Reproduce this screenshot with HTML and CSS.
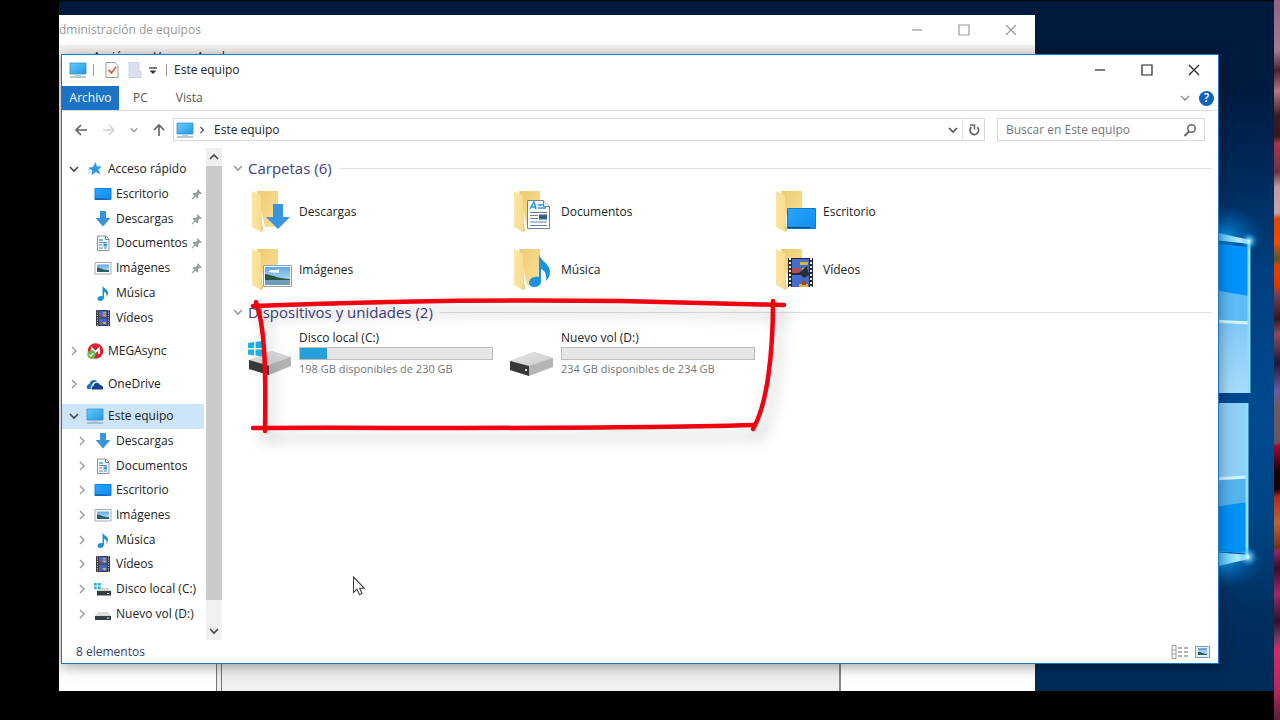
FILE: index.html
```html
<!DOCTYPE html>
<html lang="es">
<head>
<meta charset="utf-8">
<title>Este equipo</title>
<link rel="stylesheet" href="styles.css">
</head>
<body>
<svg class="defs" aria-hidden="true">
  <defs>
    <linearGradient id="gScreen" x1="0" y1="0" x2="1" y2="1"><stop offset="0" stop-color="#67cdfb"/><stop offset="1" stop-color="#2196e4"/></linearGradient>
    <linearGradient id="gFolder" x1="0" y1="0" x2="1" y2="1"><stop offset="0" stop-color="#eecb70"/><stop offset="1" stop-color="#fae09a"/></linearGradient>
    <linearGradient id="gFlap" x1="0" y1="0" x2="1" y2="0"><stop offset="0" stop-color="#fce5a4"/><stop offset="1" stop-color="#f9dc90"/></linearGradient>
    <linearGradient id="gDesk" x1="0" y1="0" x2="1" y2="1"><stop offset="0" stop-color="#2aa6fb"/><stop offset="1" stop-color="#0b8cf0"/></linearGradient>
    <linearGradient id="gDrive" x1="0" y1="0" x2="1" y2="1"><stop offset="0" stop-color="#e6e6e6"/><stop offset="1" stop-color="#cbcbcb"/></linearGradient>
    <linearGradient id="gSky" x1="0" y1="0" x2="0" y2="1"><stop offset="0" stop-color="#5ea5e6"/><stop offset="1" stop-color="#d6ecf9"/></linearGradient>
  </defs>
  <symbol id="pc" viewBox="0 0 18 16"><path d="M1 1h16v11H1z" fill="url(#gScreen)" stroke="#3b8fc9" stroke-width=".8"/><path d="M6 13h6v1H6z" fill="#b9cbd6"/><path d="M1 14.4h16v1.2H1z" fill="#8ba2b0"/></symbol>
  <symbol id="star" viewBox="0 0 16 16"><path d="M8.3 1l1.8 4.5 4.700-.2-3.400 3.500 2 4.700-4.500-2.400-4.400 3.400.8-5L1 6.700l5-.7z" fill="#2f9be8"/><path d="M1 9l3-1M1 12l2.500-1" stroke="#8ecbf4"/></symbol>
  <symbol id="desk" viewBox="0 0 18 16"><path d="M1 2.500h16v11H1z" fill="url(#gDesk)" stroke="#1280d4"/><path d="M1 13h12" stroke="#0a4f8c"/></symbol>
  <symbol id="down" viewBox="0 0 16 16"><path d="M5 0h6v7h4.500L8 15.500.5 7H5z" fill="#3a93dd"/></symbol>
  <symbol id="doc" viewBox="0 0 16 16"><path d="M2.500 1h8.500l3 3v11.500H2.500z" fill="#f7fafb" stroke="#8c979d"/><path d="M10.500 1v3.500H14M4 7.500h8M4 10h3.500M4 13h4M9 13h3" fill="none" stroke="#5b87a5"/><path d="M4 5h4" stroke="#32a0e6" stroke-width="1.500"/><path d="M8.500 8.500h3.500v3H8.500z" fill="#379ad1"/></symbol>
  <symbol id="pic" viewBox="0 0 18 16"><path d="M1 2.500h16v11.500H1z" fill="#fff" stroke="#a3abb5"/><path d="M3 4.500h12v7.500H3z" fill="url(#gSky)"/><path d="M3 7.500c4 0 5 2.500 12 2.500v2H3z" fill="#276472"/></symbol>
  <symbol id="note" viewBox="0 0 16 16"><path d="M7.500 0c.5 3.500 5.500 4 5.500 7.500 0 2-.8 3.500-1.500 4.500.5-3-.5-4.500-2.500-5.200V12.500c0 2-1.600 3.500-3.700 3.500C3.500 16 2.500 15 2.500 13.700c0-1.800 2-3.200 5-2.700z" fill="#1e93dd"/></symbol>
  <symbol id="film" viewBox="0 0 14 16"><path d="M0 0h14v16H0z" fill="#3a3c42"/><path d="M1.500 0v16M12.500 0v16" stroke="#b9b9b9" stroke-dasharray="1.200 1.200"/><path d="M3 1h8v6.500H3zM3 8.500h8V15H3z" fill="#4a66c8"/><path d="M7 2h3v1.500H7zM6 4.500h4v2H8zM6 12h4v2H8z" fill="#d9ad2b"/><path d="M3 5h3v2.500H3z" fill="#8a4a64"/></symbol>
  <symbol id="mega" viewBox="0 0 18 16"><circle cx="9.500" cy="8" r="7.800" fill="#dc2334"/><path d="M6 11V5.500L9.500 9 13 5.500V11" fill="none" stroke="#fff" stroke-width="1.800"/><circle cx="5.500" cy="11.500" r="4.200" fill="#66b548"/><path d="M3.500 11.500l1.500 1.600 2.500-3" fill="none" stroke="#fff" stroke-width="1.200"/></symbol>
  <symbol id="cloud" viewBox="0 0 18 16"><path d="M1.500 13C0 11 1 8.500 3.500 8 4 4 9 2.500 11.500 5.500 8 5.500 6 7.500 5.700 10 4.500 10.500 4.500 12 5 13z" fill="#1f6fc4"/><path d="M6 13.500c-1-2 0-3.300 1.500-3.500C8 6.500 12.500 5.500 14 9c2.500 0 4 2.700 2.500 4.500z" fill="#12418f"/></symbol>
  <symbol id="hdd" viewBox="0 0 18 16"><path d="M4 6h10l3 4H1z" fill="#dcdcdc"/><path d="M1 10h16v4H1z" fill="#3a3d40"/><path d="M13 11.500h2v1h-2z" fill="#d6f2ff"/></symbol>
  <symbol id="hddwin" viewBox="0 0 18 16"><path d="M5 7h9l3 3H3z" fill="#d4d4d4"/><path d="M3 10h14v4.500H3z" fill="#3a3d40"/><path d="M13 12h2v1h-2z" fill="#d6f2ff"/><path d="M0 2h2.700v2.500H0zM3.700 2h3v2.500h-3zM0 5.500h2.700V8H0zM3.700 5.500h3V8h-3z" fill="#1fb6d8"/></symbol>
  <symbol id="pin" viewBox="0 0 12 12"><path d="M6.500 1L11 5.500 9.800 6 8.700 5.700 7 7.500 7.300 9.500 6.200 10.500 1.500 5.800 2.500 4.700 4.500 5 6.300 3.300 6 2z" fill="#98a0a6"/><path d="M4 8L1 11" stroke="#98a0a6" stroke-width="1.200"/></symbol>
  <symbol id="right" viewBox="0 0 10 10"><path d="M3 1l4 4-4 4" fill="none" stroke="currentColor" stroke-width="1.400"/></symbol>
  <symbol id="open" viewBox="0 0 10 10"><path d="M1 3l4 4 4-4" fill="none" stroke="currentColor" stroke-width="1.600"/></symbol>
  <symbol id="folder" viewBox="0 0 44 44"><path d="M6 1h21v36H14z" fill="url(#gFolder)"/><path d="M1 1l9 4.500V42L1 37z" fill="url(#gFlap)"/><path d="M10 5.500V42l2-1v-3.500l-1-1.500z" fill="#f3cf78"/></symbol>
  <symbol id="min" viewBox="0 0 12 12"><path d="M1 6h10" stroke="currentColor" stroke-width="1.200"/></symbol>
  <symbol id="max" viewBox="0 0 12 12"><path d="M1 1h10v10H1z" fill="none" stroke="currentColor" stroke-width="1.200"/></symbol>
  <symbol id="close" viewBox="0 0 12 12"><path d="M1 1l10 10M11 1L1 11" stroke="currentColor" stroke-width="1.200"/></symbol>
</svg>

<main class="desktop">
  <svg class="wallpaper" viewBox="0 0 240 691" preserveAspectRatio="none" aria-hidden="true">
    <defs>
      <radialGradient id="glow"><stop offset="0" stop-color="#0aa5ff" stop-opacity=".8"/><stop offset="1" stop-color="#0067c0" stop-opacity="0"/></radialGradient>
      <radialGradient id="flare"><stop offset="0" stop-color="#e8ffff"/><stop offset=".3" stop-color="#7fdcff" stop-opacity=".7"/><stop offset="1" stop-color="#0a8ae0" stop-opacity="0"/></radialGradient>
      <linearGradient id="paneA" x1="0" y1="0" x2="0" y2="1"><stop offset="0" stop-color="#80c8f8"/><stop offset="1" stop-color="#a6dcfa"/></linearGradient>
      <linearGradient id="ray"><stop offset="0" stop-color="#35bdf8"/><stop offset="1" stop-color="#e6ffff"/></linearGradient>
    </defs>
    <ellipse cx="188" cy="235" rx="42" ry="30" fill="url(#glow)"/>
    <ellipse cx="188" cy="562" rx="42" ry="26" fill="url(#glow)"/>
    <path d="M180 243l35 4v146h-35z" fill="#0092fb"/>
    <path d="M180 290l35 6v97h-35z" fill="#5cbcf5"/>
    <path d="M180 321h35v72h-35z" fill="url(#paneA)"/>
    <path d="M180 321l35 2" stroke="#d6f4ff" stroke-width="3"/>
    <path d="M180 403h34v150l-34-2z" fill="#90d0f8"/>
    <path d="M180 479l34-2v76l-34-2z" fill="#55b4ee"/>
    <path d="M180 507l34-5v51l-34-2z" fill="#0092f8"/>
    <path d="M180 479l34-2" stroke="#d6f4ff" stroke-width="3"/>
    <path d="M215 243v150M213 403v153" stroke="#8ce0fb" stroke-width="3"/>
    <path d="M180 232l36 8v4l-36-4zM180 552l35 3v4l-35 8z" fill="url(#ray)"/>
    <circle cx="215" cy="241" r="9" fill="url(#flare)"/>
    <circle cx="214" cy="557" r="10" fill="url(#flare)"/>
  </svg>

  <section class="console" aria-label="Administración de equipos">
    <header class="console-bar">
      <span class="console-title">dministración de equipos</span>
      <div class="caption muted">
        <button aria-label="Minimizar"><svg><use href="#min"/></svg></button>
        <button aria-label="Maximizar"><svg><use href="#max"/></svg></button>
        <button aria-label="Cerrar"><svg><use href="#close"/></svg></button>
      </div>
    </header>
    <nav class="console-menu"><span>Acción</span><span>Ver</span><span>Ayuda</span></nav>
    <div class="console-body"><div></div><div class="splitter"></div><div class="pane"></div><div></div></div>
  </section>

  <section class="explorer" aria-label="Este equipo">
    <header class="titlebar">
      <svg class="pc-icon"><use href="#pc"/></svg>
      <span class="bar"></span>
      <button class="tool" aria-label="Propiedades"><svg viewBox="0 0 14 16"><path d="M1 .5h9l3 3v12H1z" fill="#faf8f7" stroke="#a49c9c"/><path d="M3.500 8l3 3 4.500-6" fill="none" stroke="#d9624c" stroke-width="1.800"/></svg></button>
      <button class="tool" aria-label="Nueva carpeta"><svg viewBox="0 0 14 16"><path d="M1 .5h10v9h2v6H1z" fill="#dcdff0" stroke="#cdd1e4"/></svg></button>
      <button class="more" aria-label="Personalizar"><svg viewBox="0 0 8 8"><path d="M0 1h8" stroke="#333" stroke-width="1.300"/><path d="M.5 3.500h7L4 7z" fill="#333"/></svg></button>
      <span class="bar"></span>
      <h1>Este equipo</h1>
      <div class="caption">
        <button aria-label="Minimizar"><svg><use href="#min"/></svg></button>
        <button aria-label="Maximizar"><svg><use href="#max"/></svg></button>
        <button aria-label="Cerrar"><svg><use href="#close"/></svg></button>
      </div>
    </header>

    <nav class="ribbon">
      <button class="tab file">Archivo</button>
      <button class="tab">PC</button>
      <button class="tab">Vista</button>
      <span class="spacer"></span>
      <button class="expand" aria-label="Expandir"><svg><use href="#open"/></svg></button>
      <button class="help" aria-label="Ayuda">?</button>
    </nav>

    <div class="address-row">
      <div class="arrows">
        <button aria-label="Atrás"><svg viewBox="0 0 14 14"><path d="M13 7H2M7 2L2 7l5 5" fill="none" stroke="#606060" stroke-width="1.600"/></svg></button>
        <button aria-label="Adelante"><svg viewBox="0 0 14 14"><path d="M1 7h11M7 2l5 5-5 5" fill="none" stroke="#d2d2d2" stroke-width="1.600"/></svg></button>
        <button aria-label="Recientes"><svg class="small"><use href="#open"/></svg></button>
        <button aria-label="Subir"><svg viewBox="0 0 14 14"><path d="M7 13V2M2 7l5-5 5 5" fill="none" stroke="#606060" stroke-width="1.600"/></svg></button>
      </div>
      <div class="address">
        <svg class="pc-icon"><use href="#pc"/></svg>
        <svg class="crumb"><use href="#right"/></svg>
        <span>Este equipo</span>
        <span class="spacer"></span>
        <button class="history" aria-label="Ubicaciones"><svg><use href="#open"/></svg></button>
        <button class="refresh" aria-label="Actualizar"><svg viewBox="0 0 14 14"><path d="M10.300 4.200A4.300 4.300 0 1 1 4.500 4" fill="none" stroke="#666" stroke-width="1.700"/><path d="M3 2h4.500v4.500" fill="none" stroke="#666" stroke-width="1.500"/></svg></button>
      </div>
      <form class="search">
        <input type="text" aria-label="Buscar" placeholder="Buscar en Este equipo">
        <button type="button" aria-label="Buscar"><svg viewBox="0 0 14 14"><circle cx="8.500" cy="5.500" r="3.700" fill="none" stroke="#666" stroke-width="1.500"/><path d="M6 8.500L1.500 13" stroke="#666" stroke-width="2"/></svg></button>
      </form>
    </div>

    <div class="content">
      <nav class="tree" aria-label="Panel de navegación">
        <ul class="quick">
          <li><a href="#" class="root"><svg class="tw dark"><use href="#open"/></svg><svg class="ic"><use href="#star"/></svg>Acceso rápido</a></li>
          <li><a href="#"><svg class="ic"><use href="#desk"/></svg>Escritorio<svg class="pin"><use href="#pin"/></svg></a></li>
          <li><a href="#"><svg class="ic"><use href="#down"/></svg>Descargas<svg class="pin"><use href="#pin"/></svg></a></li>
          <li><a href="#"><svg class="ic"><use href="#doc"/></svg>Documentos<svg class="pin"><use href="#pin"/></svg></a></li>
          <li><a href="#"><svg class="ic"><use href="#pic"/></svg>Imágenes<svg class="pin"><use href="#pin"/></svg></a></li>
          <li><a href="#"><svg class="ic"><use href="#note"/></svg>Música</a></li>
          <li><a href="#"><svg class="ic"><use href="#film"/></svg>Vídeos</a></li>
        </ul>
        <ul class="single"><li><a href="#" class="root"><svg class="tw"><use href="#right"/></svg><svg class="ic"><use href="#mega"/></svg>MEGAsync</a></li></ul>
        <ul class="single"><li><a href="#" class="root"><svg class="tw"><use href="#right"/></svg><svg class="ic"><use href="#cloud"/></svg>OneDrive</a></li></ul>
        <ul class="computer">
          <li><a href="#" class="root current"><svg class="tw dark"><use href="#open"/></svg><svg class="ic"><use href="#pc"/></svg>Este equipo</a></li>
          <li><a href="#" class="child"><svg class="tw"><use href="#right"/></svg><svg class="ic"><use href="#down"/></svg>Descargas</a></li>
          <li><a href="#" class="child"><svg class="tw"><use href="#right"/></svg><svg class="ic"><use href="#doc"/></svg>Documentos</a></li>
          <li><a href="#" class="child"><svg class="tw"><use href="#right"/></svg><svg class="ic"><use href="#desk"/></svg>Escritorio</a></li>
          <li><a href="#" class="child"><svg class="tw"><use href="#right"/></svg><svg class="ic"><use href="#pic"/></svg>Imágenes</a></li>
          <li><a href="#" class="child"><svg class="tw"><use href="#right"/></svg><svg class="ic"><use href="#note"/></svg>Música</a></li>
          <li><a href="#" class="child"><svg class="tw"><use href="#right"/></svg><svg class="ic"><use href="#film"/></svg>Vídeos</a></li>
          <li><a href="#" class="child"><svg class="tw"><use href="#right"/></svg><svg class="ic"><use href="#hddwin"/></svg>Disco local (C:)</a></li>
          <li><a href="#" class="child"><svg class="tw"><use href="#right"/></svg><svg class="ic"><use href="#hdd"/></svg>Nuevo vol (D:)</a></li>
        </ul>
      </nav>
      <div class="scrollbar">
        <button class="up" aria-label="Subir lista"><svg><use href="#open"/></svg></button>
        <div class="thumb"></div>
        <button aria-label="Bajar lista"><svg><use href="#open"/></svg></button>
      </div>

      <div class="files">
        <h2><svg><use href="#open"/></svg>Carpetas (6)</h2>
        <div class="grid folders">
          <button class="item"><svg viewBox="0 0 44 44"><use href="#folder"/><path d="M22 14h10v13h7L27 39 15 27h7z" fill="#3a95e0"/></svg>Descargas</button>
          <button class="item"><svg viewBox="0 0 44 44"><use href="#folder"/><path d="M14.500 10.500h16l6 6v22h-22z" fill="#fff" stroke="#77828c"/><path d="M30.500 10.500v6h6" fill="#eee" stroke="#77828c"/><path d="M17 19l4-7 2 7M18.500 17h4M25 15h5M25 18h8" fill="none" stroke="#2995dd" stroke-width="1.500"/><path d="M17 22.500h17M17 25.500h8M17 28.500h8M17 32h17M17 35.500h17" stroke="#6285a4"/><path d="M26 24.500h8v5h-8z" fill="#336186"/></svg>Documentos</button>
          <button class="item"><svg viewBox="0 0 44 44"><use href="#folder"/><path d="M12.500 18.500h28v20h-28z" fill="url(#gDesk)" stroke="#1277c4"/><path d="M13 37.500h22" stroke="#07467a"/></svg>Escritorio</button>
          <button class="item"><svg viewBox="0 0 44 44"><use href="#folder"/><path d="M12.500 17.500h28v21h-28z" fill="#fff" stroke="#8ea2b4"/><path d="M14 19h25v18H14z" fill="url(#gSky)"/><path d="M17 24c4-4 6 0 11-3v4z" fill="#fff"/><path d="M14 26c8 1 15 5 25 5v2H14z" fill="#285740"/><path d="M14 32h25v5H14z" fill="#6d9dbb"/></svg>Imágenes</button>
          <button class="item"><svg viewBox="0 0 44 44"><use href="#folder"/><path d="M26 6c1 7 11 9 11 18 0 4-2 7-4 9 1-7-1-10-5-12v12c0 4-3 6-7 6-3 0-5-2-5-4 0-4 4-7 10-6z" fill="#1e93dd"/></svg>Música</button>
          <button class="item"><svg viewBox="0 0 44 44"><use href="#folder"/><path d="M13 10h25v29H13z" fill="#292b30"/><path d="M15 10v29M36 10v29" stroke="#eee" stroke-width="2" stroke-dasharray="2 2"/><path d="M17 11h17v14H17zM17 27h17v12H17z" fill="#466dcb"/><path d="M25 14h8v3h-8zM27 20h6v4h-6zM24 36h9v3H24z" fill="#dfb52a"/><path d="M17 20h7l3 5H17z" fill="#b04e56"/><path d="M24 25l8-7 2 9-5 3z" fill="#282f3c"/><path d="M27 33h4v4h-4z" fill="#a2442b"/></svg>Vídeos</button>
        </div>
        <h2><svg><use href="#open"/></svg>Dispositivos y unidades (2)</h2>
        <div class="grid drives">
          <button class="drive"><svg viewBox="0 0 46 40"><path d="M2 22l22-9 20 6v9l-22 9-20-6z" fill="#b4b4b4"/><path d="M2 22l22-9 20 6-22 8z" fill="url(#gDrive)"/><path d="M2 22l20 6v9L2 31z" fill="#36383a"/><path d="M1 5l6-1v6H1zM8.500 4l7-1v7h-7zM1 11.500h6v6l-6-1zM8.500 11.500h7v7l-7-1z" fill="#19b3ea"/></svg>
            <span class="info"><span>Disco local (C:)</span><span class="usage"><span class="used" style="width:14%"></span></span><span class="free">198 GB disponibles de 230 GB</span></span></button>
          <button class="drive"><svg viewBox="0 0 46 40"><path d="M1 23l24-9 19 6v9l-24 9-19-6z" fill="#b4b4b4"/><path d="M1 23l24-9 19 6-24 8z" fill="url(#gDrive)"/><path d="M1 23l19 5v10L1 32z" fill="#36383a"/><path d="M16 31h2v2h-2z" fill="#ddd"/></svg>
            <span class="info"><span>Nuevo vol (D:)</span><span class="usage"></span><span class="free">234 GB disponibles de 234 GB</span></span></button>
        </div>
      </div>
    </div>

    <footer class="status">
      <span>8 elementos</span>
      <span class="spacer"></span>
      <button aria-label="Detalles"><svg viewBox="0 0 18 14"><path d="M1 .5h4v13H1zM1 5h4M1 9h4" fill="none" stroke="#999"/><path d="M7 3h4M13 3h4M7 7h4M13 7h4M7 11h4M13 11h4" stroke="#666"/></svg></button>
      <button aria-label="Iconos grandes"><svg viewBox="0 0 18 14"><path d="M1.500 1.500h14v11h-14z" fill="#e4f0fb" stroke="#7d9cbd"/><path d="M4 4h9v6H4z" fill="#a2cdf3"/><path d="M4 7c4 0 5 2 9 2v1H4z" fill="#286052"/><path d="M4 4h9" stroke="#315da0"/></svg></button>
    </footer>
  </section>

  <svg class="marker" viewBox="0 0 560 150" aria-hidden="true">
    <g fill="none" stroke="#ef0310" stroke-width="4.500" stroke-linecap="round" stroke-linejoin="round">
      <path d="M12 16C110 12 230 9 380 11L543 15"/>
      <path d="M15 12C24 37 25 80 24 141"/>
      <path d="M12 138C150 137 330 140 514 135"/>
      <path d="M532 11C532 65 526 115 512 139"/>
    </g>
  </svg>
  <svg class="pointer" viewBox="0 0 14 20" aria-hidden="true"><path d="M1.500 1v15.500l3.500-3.300 2.500 5.500 2.500-1.200-2.300-5.200h4.600z" fill="#fff" stroke="#444" stroke-width="1.100"/></svg>
</main>
<div class="edge" aria-hidden="true"></div>
</body>
</html>
```
FILE: styles.css
```css
* { box-sizing: border-box; }

body {
  margin: 0;
  min-height: 100vh;
  display: grid;
  grid-template-columns: minmax(0, 1fr) 6px;
  padding-left: 59px;
  background: #000;
  color: #222;
  font: 12px/16px "Open Sans", "Noto Sans", sans-serif;
}

button {
  display: inline-flex;
  align-items: center;
  justify-content: center;
  padding: 0;
  border: 0;
  background: none;
  color: inherit;
  font: inherit;
}

svg { flex: none; }
a { color: inherit; text-decoration: none; }
ul { list-style: none; margin: 0; padding: 0; }
h1, h2 { margin: 0; font-weight: 400; }
.defs { position: absolute; width: 0; height: 0; }
.spacer { flex: 1; }

.desktop {
  position: relative;
  margin-bottom: 29px;
  overflow: hidden;
  background: linear-gradient(180deg, #000 0, #001a3d 2px, #001b3f 90px, #002b5c 180px, #003f80 270px, #004a90 420px, #004583 520px, #002f60 610px, #002a58 100%);
}

.wallpaper { position: absolute; top: 0; right: 0; width: 240px; height: 100%; }

.edge {
  background: linear-gradient(170deg, #8d6487 0, #a87b91 50px, #4a1f2c 70px, #b77886 90px, #391a20 115px, #3c171d 135px, #a7354f 142px, #6e3342 170px, #c09aa5 185px, #c9a5ac 210px, #d84a0a 216px, #e84c04 240px, #553 255px, #d54307 262px, #d33c05 282px, #7a4054 290px, #351620 315px, #8c4b60 330px, #1c1838 358px, #6a5a9a 385px, #6d5a66 400px, #675660 436px, #a00a30 440px, #160008 465px, #170004 482px, #a63020 490px, #b9653c 515px, #75301c 540px, #8d2a60 543px, #3a0c28 560px, #a02a68 585px, #30102a 612px, #7c3a62 630px, #cf2d68 640px, #b32a5e 680px, #552038 100%);
}

.caption { display: flex; margin-left: auto; padding-right: 1px; color: #222; }
.caption button { width: 47px; height: 30px; }
.caption svg { width: 12px; height: 12px; }
.caption.muted { color: #999; }

/* Computer management window, behind */
.console {
  position: absolute;
  inset: 15px 239px 0 0;
  display: flex;
  flex-direction: column;
  background: #fff;
}
.console-bar { display: flex; align-items: center; height: 30px; color: #999; }
.console-menu { display: flex; gap: 24px; padding: 4px 34px; height: 22px; color: #111; background: #f4f4f4; }
.console-body { flex: 1; display: grid; grid-template-columns: 157px 6px 1fr 194px; }
.splitter { border: solid #777; border-width: 0 1px; background: #eee; }
.pane { background: #f0f0f0; border-right: 2px solid #888; }

/* Explorer window */
.explorer {
  position: absolute;
  inset: 54px 55px 27px 2px;
  display: flex;
  flex-direction: column;
  border: 1px solid #1b78c8;
  background: #fff;
  box-shadow: 0 2px 14px rgba(0, 0, 0, .4);
}

.titlebar { display: flex; align-items: center; height: 31px; padding: 0 0 1px 7px; }
.titlebar .bar { width: 1px; height: 12px; margin-left: 6px; background: #999; }
.titlebar .tool { margin-left: 11px; width: 14px; }
.tool svg { width: 14px; height: 16px; }
.titlebar .tool + .tool { margin-left: 9px; }
.titlebar .more { margin: 2px 3px 0 7px; }
.more svg { width: 8px; height: 8px; }
.titlebar h1 { margin-left: 7px; font-size: 12px; }
.pc-icon { width: 18px; height: 16px; }

.ribbon { display: flex; height: 25px; padding-right: 4px; border-bottom: 1px solid #dcdcdc; color: #555; }
.tab { padding: 0 14px; }
.tab.file { width: 57px; background: #1c72c4; color: #fff; }
.expand { width: 28px; color: #999; }
.expand svg, .history svg { width: 10px; height: 10px; }
.help { align-self: center; width: 15px; height: 15px; border-radius: 50%; background: #0b62c0; color: #fff; font-weight: 600; }

.address-row { display: flex; align-items: center; height: 37px; padding: 0 13px 0 12px; }
.arrows { display: flex; justify-content: space-between; width: 92px; margin-right: 7px; }
.arrows svg { width: 14px; height: 14px; }
.arrows .small { width: 8px; height: 8px; color: #888; }
.address { flex: 1; display: flex; align-items: center; height: 23px; padding-left: 2px; border: 1px solid #d9d9d9; }
.crumb { width: 8px; height: 8px; margin: 0 8px 0 4px; color: #444; }
.history { width: 18px; color: #555; }
.refresh { width: 22px; align-self: stretch; border-left: 1px solid #e2e2e2; }
.refresh svg, .search svg { width: 14px; height: 14px; }
.search { display: flex; align-items: center; width: 208px; height: 23px; margin-left: 12px; padding: 0 7px 0 8px; border: 1px solid #d9d9d9; }
.search input { flex: 1; min-width: 0; padding: 0; border: 0; outline: 0; background: none; font: inherit; }
.search input::placeholder { color: #777; opacity: 1; }

.content { flex: 1; display: flex; min-height: 0; }
.tree { width: 144px; padding-top: 9px; overflow: hidden; white-space: nowrap; }
.quick, .single, .computer { display: grid; grid-auto-rows: 1fr; }
.quick { height: 173px; }
.computer { height: 222px; }
.single { height: 25px; }
.single, .computer { margin-top: 8px; }
.tree li { display: grid; }
.tree a { display: flex; align-items: center; padding-left: 32px; }
.tree a.root { padding-left: 7px; }
.tree a.child { padding-left: 15px; }
.tree a.current { margin-right: 2px; background: #cce4f8; }
.tw { width: 10px; height: 10px; color: #999; margin-right: 7px; }
.tw.dark { color: #444; }
.ic { width: 18px; height: 16px; margin-right: 4px; }
.pin { width: 12px; height: 12px; margin: 0 3px 0 auto; }

.scrollbar { display: flex; flex-direction: column; width: 16px; background: #f0f0f0; }
.scrollbar button { height: 18px; color: #444; }
.scrollbar svg { width: 10px; height: 10px; }
.scrollbar .up svg { transform: rotate(180deg); }
.thumb { flex: 1; margin-bottom: 22px; background: #cacaca; }

.files { flex: 1; min-width: 0; padding: 9px 6px 0 11px; }
.files h2 { display: flex; align-items: center; height: 22px; color: #3e4184; font-size: 15px; line-height: 20px; }
.files h2 svg { width: 10px; height: 10px; margin-right: 5px; color: #999; }
.files h2::after { content: ""; flex: 1; height: 1px; margin-left: 7px; background: #e2e2e2; }
.grid { display: grid; grid-template-columns: repeat(auto-fill, 262px); }
.folders { padding: 4px 0 3px 18px; grid-auto-rows: 57px; row-gap: 1px; }
.item { justify-content: flex-start; }
.item svg { width: 44px; height: 44px; margin-right: 4px; }
.drives { padding: 7px 0 0 14px; }
.drive { align-items: flex-start; justify-content: flex-start; text-align: left; }
.drive > svg { width: 46px; height: 40px; margin: 8px 6px 0 0; }
.info { display: flex; flex-direction: column; width: 194px; }
.usage { height: 13px; margin: 1px 0; border: 1px solid #bcbcbc; background: #e6e6e6; }
.used { display: block; height: 100%; background: #26a0da; }
.free { color: #757575; font-size: 11px; }

.status { display: flex; align-items: center; height: 23px; padding: 0 6px 0 14px; color: #34406a; }
.status button { width: 18px; margin-left: 5px; }
.status svg { width: 18px; height: 14px; }

/* Hand-drawn highlight and mouse pointer, over the windows */
.marker { position: absolute; left: 182px; top: 290px; width: 560px; height: 150px; overflow: visible; filter: drop-shadow(6px 10px 7px rgba(0, 0, 0, .22)); }
.pointer { position: absolute; left: 293px; top: 576px; width: 14px; height: 20px; }
```
